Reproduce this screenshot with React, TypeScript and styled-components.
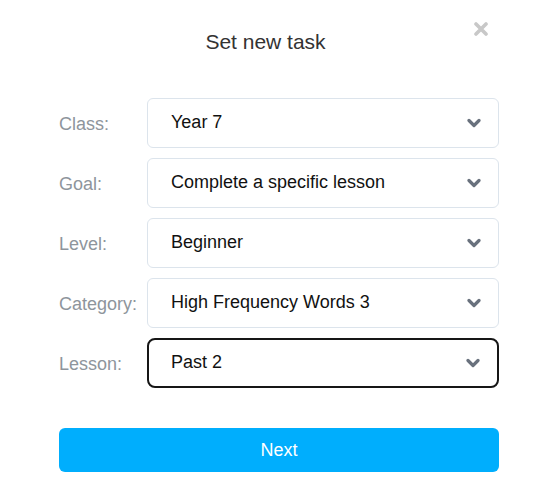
import React from 'react'
import styled, { createGlobalStyle } from 'styled-components'

const GlobalStyle = createGlobalStyle`
  html, body {
    margin: 0;
    padding: 0;
    background: #ffffff;
    font-family: "Liberation Sans", Arial, sans-serif;
  }
`

const Modal = styled.div`
  position: relative;
  width: 552px;
  height: 492px;
  box-sizing: border-box;
  padding: 30px 53px 0 59px;
  display: flex;
  flex-direction: column;
`

const Title = styled.h2`
  margin: 0 27px 0 0;
  height: 24px;
  font-size: 21px;
  font-weight: 400;
  color: #333333;
  text-align: center;
  line-height: 24px;
`

const CloseButton = styled.button`
  position: absolute;
  top: 22px;
  right: 64px;
  padding: 0;
  border: none;
  background: none;
  display: flex;
  cursor: pointer;
`

const Form = styled.div`
  margin-top: 44px;
  display: flex;
  flex-direction: column;
  gap: 10px;
`

const Row = styled.div`
  display: flex;
  align-items: center;
`

const Label = styled.label`
  width: 88px;
  flex-shrink: 0;
  font-size: 18px;
  color: #8e959c;
  padding-top: 2px;
`

const Select = styled.div<{ $active?: boolean }>`
  flex: 1;
  height: 50px;
  box-sizing: border-box;
  border: ${(p) => (p.$active ? '2px solid #161616' : '1px solid #dce4ec')};
  border-radius: ${(p) => (p.$active ? '8px' : '6px')};
  padding: 0 17px 2px ${(p) => (p.$active ? '22px' : '23px')};
  display: flex;
  align-items: center;
  justify-content: space-between;
  font-size: 18px;
  color: #111111;
`

const Chevron = styled.svg`
  width: 14px;
  height: 10px;
  margin-top: 2px;
`

const NextButton = styled.button`
  margin-top: 40px;
  width: 100%;
  height: 44px;
  border: none;
  border-radius: 6px;
  background: #00aefd;
  color: #ffffff;
  font-family: "Liberation Sans", Arial, sans-serif;
  font-size: 18px;
  cursor: pointer;
`

const fields = [
  { label: 'Class:', value: 'Year 7' },
  { label: 'Goal:', value: 'Complete a specific lesson' },
  { label: 'Level:', value: 'Beginner' },
  { label: 'Category:', value: 'High Frequency Words 3' },
  { label: 'Lesson:', value: 'Past 2', active: true },
]

export default function App() {
  return (
    <>
      <GlobalStyle />
      <Modal>
        <CloseButton aria-label="Close">
          <svg width="14" height="14" viewBox="0 0 14 14">
            <path d="M2 2 L12 12 M12 2 L2 12" stroke="#c8c8c8" strokeWidth="3.6" strokeLinecap="round" />
          </svg>
        </CloseButton>
        <Title>Set new task</Title>
        <Form>
          {fields.map((f) => (
            <Row key={f.label}>
              <Label>{f.label}</Label>
              <Select $active={f.active}>
                {f.value}
                <Chevron viewBox="0 0 14 10">
                  <path d="M2 2.5 L7 7.5 L12 2.5" fill="none" stroke="#69717d" strokeWidth="3.2" strokeLinecap="round" strokeLinejoin="round" />
                </Chevron>
              </Select>
            </Row>
          ))}
        </Form>
        <NextButton>Next</NextButton>
      </Modal>
    </>
  )
}
